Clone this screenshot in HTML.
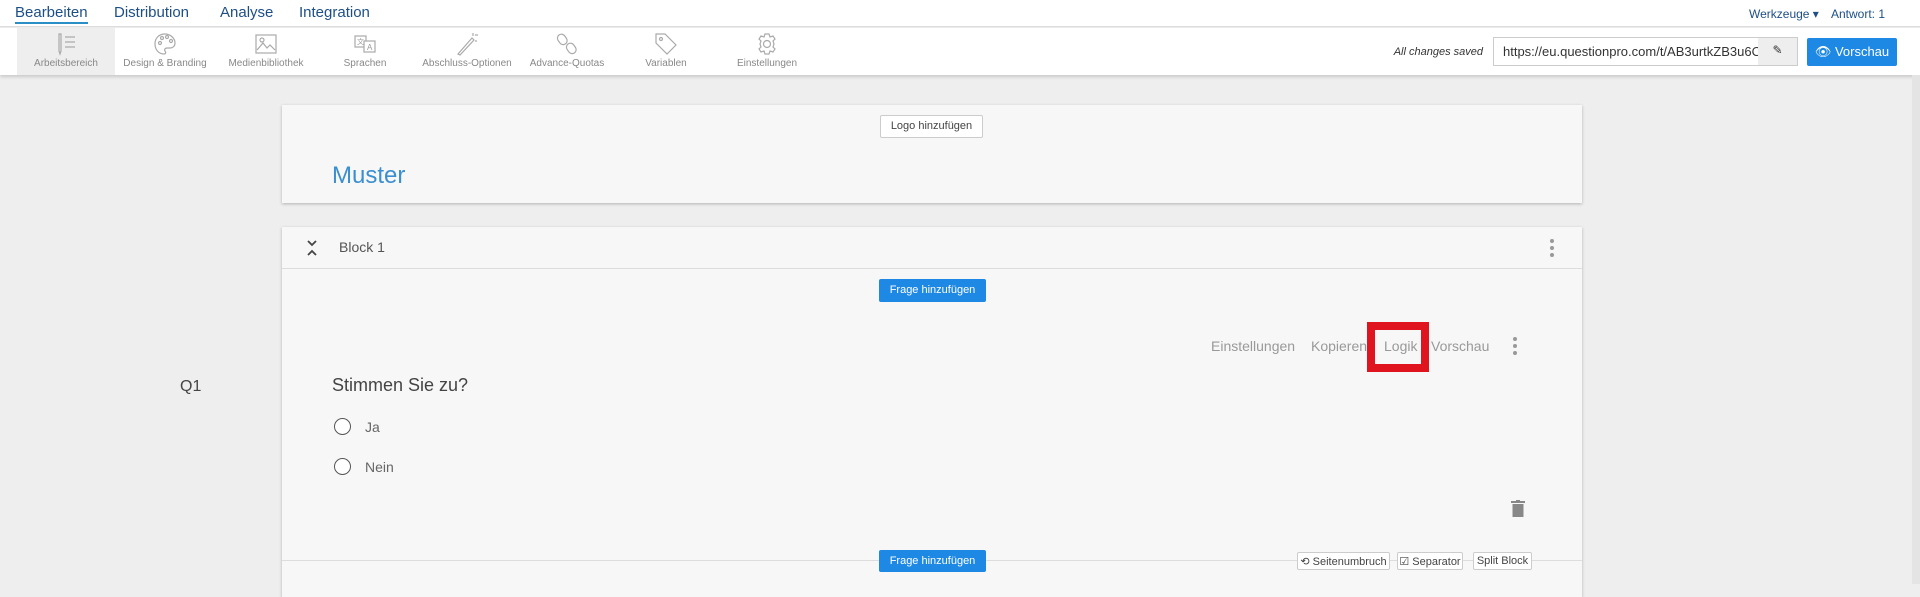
<!DOCTYPE html>
<html><head><meta charset="utf-8"><style>
*{box-sizing:border-box;margin:0;padding:0}
body{width:1920px;height:584px;overflow:hidden;background:#eeeeee;font-family:"Liberation Sans",sans-serif;position:relative;color:#555}
.abs{position:absolute}
#top{left:0;top:0;width:1920px;height:27px;background:#fff;border-bottom:1px solid #dcdcdc}
#top .t{position:absolute;top:4px;font-size:15px;color:#1d4f87}
#tb{left:0;top:28px;width:1920px;height:47px;background:#fff;box-shadow:0 2px 3px rgba(0,0,0,.15)}
.it{position:absolute;top:0;height:47px;width:100px;text-align:center;font-size:10px;color:#888}
.it svg{display:block;margin:4px auto 2px}
.card{position:absolute;left:282px;width:1300px;background:#f7f7f7;box-shadow:0 1px 3px rgba(0,0,0,.25)}
.btn{position:absolute;background:#fff;border:1px solid #ccc;border-radius:2px;font-size:11px;color:#444;text-align:center}
.blue{position:absolute;background:#1e88e5;color:#fff;font-size:11px;text-align:center;border-radius:2px}
.act{position:absolute;top:338px;font-size:14px;color:#999}
.radio{position:absolute;width:17px;height:17px;border:1.5px solid #555;border-radius:50%;background:#fff}
.dots{position:absolute;width:4px}
.dots i{display:block;width:4px;height:4px;border-radius:50%;background:#999;margin-bottom:3px}
</style></head><body>
<div id="top" class="abs">
<span class="t" style="left:15px;border-bottom:2px solid #2a8fc4;padding-bottom:1px">Bearbeiten</span>
<span class="t" style="left:114px">Distribution</span>
<span class="t" style="left:220px">Analyse</span>
<span class="t" style="left:299px">Integration</span>
<span class="t" style="left:1749px;font-size:12px;top:7px">Werkzeuge ▾</span>
<span class="t" style="left:1831px;font-size:12px;top:7px">Antwort: 1</span>
</div>
<div id="tb" class="abs">
<div class="it" style="left:17px;width:98px;background:#eee"><svg width="24" height="24" viewBox="0 0 24 24" fill="none" stroke="#aaa" stroke-width="1.2"><path d="M5 2v17l1 3 1-3V2z M11 5h10M11 10h10M11 15h10"/></svg>Arbeitsbereich</div>
<div class="it" style="left:115px"><svg width="24" height="24" viewBox="0 0 24 24" fill="none" stroke="#aaa" stroke-width="1.2"><path d="M12 2C6 2 2 6 2 12s4 10 9 10c2 0 2-2 1-3s0-3 2-3h3c3 0 5-2 5-5 0-5-5-9-10-9z"/><circle cx="7" cy="11" r="1.5"/><circle cx="9" cy="6" r="1.5"/><circle cx="14" cy="5" r="1.5"/><circle cx="18" cy="9" r="1.5"/></svg>Design &amp; Branding</div>
<div class="it" style="left:216px"><svg width="24" height="24" viewBox="0 0 24 24" fill="none" stroke="#aaa" stroke-width="1.2"><rect x="2" y="3" width="20" height="18"/><path d="M3 18l6-7 4 5 3-3 5 5"/><circle cx="8" cy="8" r="2"/></svg>Medienbibliothek</div>
<div class="it" style="left:315px"><svg width="24" height="24" viewBox="0 0 24 24" fill="none" stroke="#aaa" stroke-width="1.2"><rect x="2" y="4" width="11" height="11"/><rect x="11" y="9" width="11" height="11" fill="#fff"/><text x="14" y="18" font-size="8" fill="#999" stroke="none">A</text><text x="4" y="12" font-size="7" fill="#999" stroke="none">文</text></svg>Sprachen</div>
<div class="it" style="left:417px;width:100px"><svg width="24" height="24" viewBox="0 0 24 24" fill="none" stroke="#aaa" stroke-width="1.2"><path d="M3 22L17 6l2 2L5 23zM18 1v3M20 3h3M21 8v2"/></svg>Abschluss-Optionen</div>
<div class="it" style="left:517px"><svg width="24" height="24" viewBox="0 0 24 24" fill="none" stroke="#aaa" stroke-width="1.2"><rect x="3" y="2" width="8" height="11" rx="4" transform="rotate(-35 7 7)"/><rect x="12" y="11" width="8" height="11" rx="4" transform="rotate(-35 16 16)"/></svg>Advance-Quotas</div>
<div class="it" style="left:616px"><svg width="24" height="24" viewBox="0 0 24 24" fill="none" stroke="#aaa" stroke-width="1.2"><path d="M2 2h9l11 11-9 9L2 11z"/><circle cx="7" cy="7" r="1.5"/></svg>Variablen</div>
<div class="it" style="left:717px"><svg width="24" height="24" viewBox="0 0 24 24" fill="none" stroke="#aaa" stroke-width="1.2"><circle cx="12" cy="12" r="3.5"/><path d="M10 2h4l1 3 3-1 2 3-2 2 1 3-1 3 2 2-2 3-3-1-1 3h-4l-1-3-3 1-2-3 2-2-1-3 1-3-2-2 2-3 3 1z"/></svg>Einstellungen</div>
<span class="abs" style="left:1360px;top:18px;width:123px;text-align:right;font-size:11px;font-style:italic;color:#333">All changes saved</span>
<div class="abs" style="left:1493px;top:9px;width:305px;height:29px;border:1px solid #ccc;background:#fff;font-size:13px;color:#333;padding:6px 0 0 9px;overflow:hidden;white-space:nowrap">https://eu.questionpro.com/t/AB3urtkZB3u6Om</div>
<div class="abs" style="left:1758px;top:10px;width:39px;height:27px;background:#eee;text-align:center;font-size:12px;padding-top:5px;color:#333">✎</div>
<div class="abs" style="left:1807px;top:10px;width:90px;height:28px;background:#1e88e5;border-radius:2px;color:#fff;font-size:13px;text-align:center;padding-top:6px">👁 Vorschau</div>
</div>
<div class="abs" style="left:1912px;top:75px;width:8px;height:509px;background:#e4e4e4"></div>

<div class="card" style="top:105px;height:98px">
<div class="btn" style="left:598px;top:10px;width:103px;height:23px;padding-top:4px">Logo hinzufügen</div>
<div class="abs" style="left:50px;top:57px;font-size:24px;color:#3b8fd0">Muster</div>
</div>

<div class="card" style="top:227px;height:370px">
<div class="abs" style="left:0;top:0;width:1300px;height:42px;border-bottom:1px solid #ddd"></div>
<svg class="abs" style="left:24px;top:13px" width="12" height="16" viewBox="0 0 12 16" fill="none" stroke="#444" stroke-width="1.8"><path d="M2 1l4 4 4-4M2 15l4-4 4 4"/></svg>
<div class="abs" style="left:57px;top:12px;font-size:14px;color:#555">Block 1</div>
<div class="dots" style="left:1268px;top:12px"><i></i><i></i><i></i></div>
<div class="blue" style="left:597px;top:52px;width:107px;height:23px;padding-top:5px">Frage hinzufügen</div>
<div class="abs" style="left:50px;top:148px;font-size:18px;color:#444">Stimmen Sie zu?</div>
<div class="radio" style="left:52px;top:191px"></div><div class="abs" style="left:83px;top:192px;font-size:14px;color:#666">Ja</div>
<div class="radio" style="left:52px;top:231px"></div><div class="abs" style="left:83px;top:232px;font-size:14px;color:#666">Nein</div>
<svg class="abs" style="left:1229px;top:273px" width="14" height="17" viewBox="0 0 14 17"><rect x="0" y="1" width="14" height="2" fill="#888"/><rect x="5" y="0" width="4" height="2" fill="#888"/><rect x="1.5" y="4" width="11" height="13" fill="#888"/></svg>
<div class="abs" style="left:0;top:333px;width:1300px;height:1px;background:#ddd"></div>
<div class="blue" style="left:597px;top:323px;width:107px;height:22px;padding-top:5px">Frage hinzufügen</div>
<div class="btn" style="left:1015px;top:325px;width:93px;height:18px;padding-top:2px">⟲ Seitenumbruch</div>
<div class="btn" style="left:1115px;top:325px;width:66px;height:18px;padding-top:2px">☑ Separator</div>
<div class="btn" style="left:1191px;top:325px;width:59px;height:18px;padding-top:2px">Split Block</div>
</div>
<div class="act" style="left:1211px">Einstellungen</div>
<div class="act" style="left:1311px">Kopieren</div>
<div class="act" style="left:1384px">Logik</div>
<div class="act" style="left:1431px">Vorschau</div>
<div class="dots" style="left:1513px;top:337px"><i></i><i></i><i></i></div>
<div class="abs" style="left:1367px;top:322px;width:62px;height:50px;border:8px solid #e0141e"></div>
<div class="abs" style="left:180px;top:378px;font-size:16px;color:#444">Q1</div>
</body></html>
